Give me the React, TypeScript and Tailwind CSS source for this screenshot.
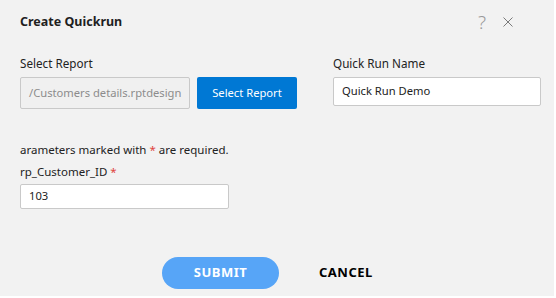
import React from "react";

const font = { fontFamily: '"Noto Sans", "Open Sans", sans-serif' };

export default function App() {
  return (
    <div
      className="w-[556px] h-[298px] bg-[#f2f2f2] flex flex-col border-r-2 border-b-2 border-white text-[#222]"
      style={font}
    >
      {/* header */}
      <div className="h-[44px] flex items-center justify-between pl-5 pr-[41px] shrink-0">
        <h1 className="text-[12.5px] font-bold text-[#1f1f1f]">Create Quickrun</h1>
        <div className="flex items-center gap-[17px] text-[#8a8a8a]">
          <span className="text-[19px] font-light leading-none text-[#9a9a9a]">?</span>
          <svg width="10" height="10" viewBox="0 0 10 10" stroke="#7a7a7a" strokeWidth="1" fill="none">
            <path d="M0.5 0.5 L9.5 9.5 M9.5 0.5 L0.5 9.5" />
          </svg>
        </div>
      </div>

      {/* report row */}
      <div className="flex pl-5 pt-[11px]">
        <div className="w-[313px] shrink-0">
          <p className="text-[11.7px] leading-[16px] mb-[6px]">Select Report</p>
          <div className="flex gap-[7px]">
            <div className="w-[170px] h-[32px] bg-[#f0f0f0] border border-[#c9c9c9] rounded-[2px] flex items-center pl-[8px] text-[11.2px] text-[#8c8c8c] whitespace-nowrap overflow-hidden">
              /Customers details.rptdesign
            </div>
            <button className="w-[100px] h-[32px] bg-[#0078d4] text-white text-[11.2px] rounded-[2px]">
              Select Report
            </button>
          </div>
        </div>
        <div>
          <p className="text-[11.7px] leading-[16px] mb-[6px]">Quick Run Name</p>
          <div className="w-[208px] h-[29px] bg-white border border-[#c9c9c9] rounded-[2px] flex items-center pl-[8px] text-[11.2px]">
            Quick Run Demo
          </div>
        </div>
      </div>

      {/* parameters */}
      <div className="pl-5 pt-[33px]">
        <p className="text-[11.5px] leading-[16px]">
          arameters marked with <span className="text-[#e0443e]">*</span> are required.
        </p>
        <p className="text-[11.5px] leading-[16px] mt-[6px]">
          rp_Customer_ID <span className="text-[#e0443e]">*</span>
        </p>
        <div className="w-[209px] h-[25px] bg-white border border-[#c9c9c9] rounded-[2px] flex items-center pl-[8px] text-[11.2px] mt-[4px]">
          103
        </div>
      </div>

      {/* footer */}
      <div className="flex-1 flex items-end justify-start pl-[162px] pb-[7px]">
        <div className="flex items-center gap-[40px]">
          <button className="w-[117px] h-[32px] rounded-full bg-[#57a5f7] text-white text-[13px] font-bold tracking-[0.5px]">
            SUBMIT
          </button>
          <button className="text-[13px] font-bold text-black tracking-[0.5px]">CANCEL</button>
        </div>
      </div>
    </div>
  );
}
